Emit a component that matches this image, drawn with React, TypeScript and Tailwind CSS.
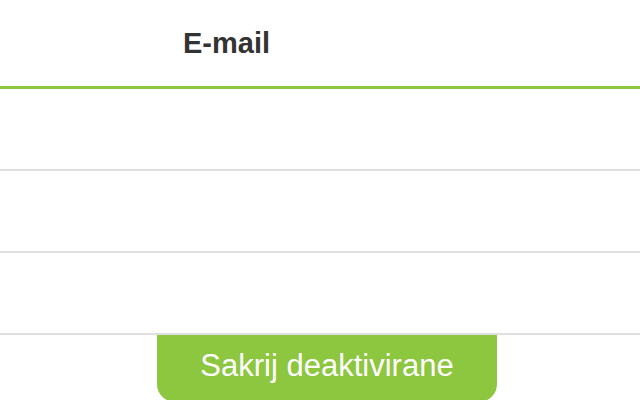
export default function App() {
  const rows = [0, 1, 2];
  return (
    <div className="w-[640px] h-[400px] overflow-hidden bg-white" style={{ fontFamily: '"Liberation Sans", Arial, sans-serif' }}>
      <div className="h-[86px] border-b-[3px] border-[#8dc63f] box-content flex items-start">
        <div className="pl-[183px] pt-[26px] text-[29px] leading-[34px] font-bold text-[#333333]">E-mail</div>
      </div>
      {rows.map((r) => (
        <div key={r} className="h-[80px] border-b-2 border-[#dfdfdf] box-content" />
      ))}
      <div className="flex">
        <div className="ml-[157px] w-[340px] h-[67px] bg-[#8dc63f] rounded-b-[18px] flex justify-center pt-[14px] text-white text-[31px] leading-[34px]">
          Sakrij deaktivirane
        </div>
      </div>
    </div>
  );
}
